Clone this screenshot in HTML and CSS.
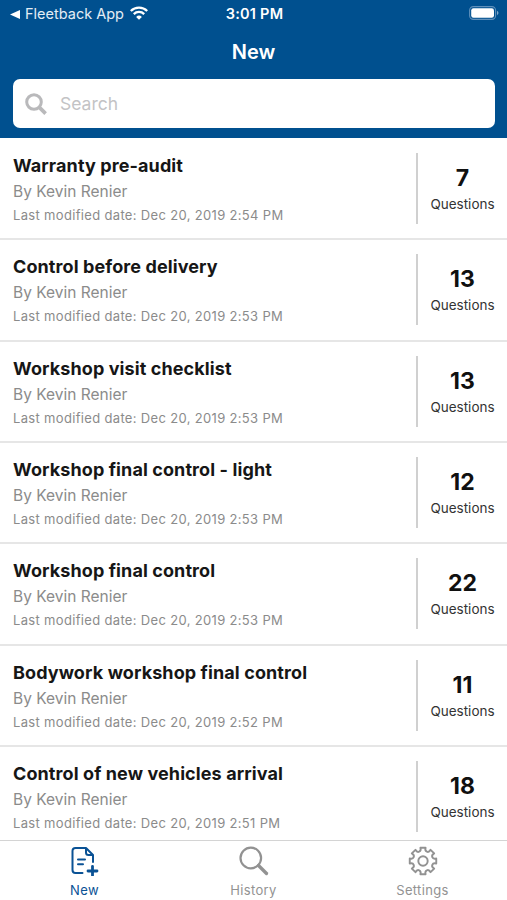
FILE: index.html
```html
<!DOCTYPE html>
<html lang="en">
<head>
<meta charset="utf-8">
<title>New</title>
<link rel="stylesheet" href="styles.css">
</head>
<body>
<div class="app">
  <header class="header">
    <div class="status">
      <div class="status-left">
        <svg class="back" width="10" height="9" viewBox="0 0 10 9"><path d="M0 4.500 10 0v9z" fill="#fff"/></svg>
        <span class="back-label">Fleetback App</span>
        <svg class="wifi" width="18" height="14" viewBox="0 0 18 14" fill="none" stroke="#fff" stroke-width="2.3"><path d="M.8 5a11.6 11.6 0 0 1 16.4 0M3.8 8.1a7.4 7.4 0 0 1 10.4 0"/><path d="M9 13.8 6.1 10.9a4.1 4.1 0 0 1 5.8 0z" fill="#fff" stroke="none"/></svg>
      </div>
      <span class="time">3:01 PM</span>
      <svg class="battery" width="30" height="14" viewBox="0 0 30 14"><rect x=".6" y=".6" width="26" height="12.8" rx="3.8" fill="none" stroke="#5f90bb" stroke-width="1.1"/><rect x="2.2" y="2.3" width="22.8" height="9.4" rx="2.2" fill="#fff"/><path d="M28 4.800Q31 7 28 9.200z" fill="#7fa6c8"/></svg>
    </div>
    <h1 class="title">New</h1>
    <div class="search">
      <svg width="22" height="22" viewBox="0 0 22 22" fill="none" stroke="#b9b9bb"><circle cx="9" cy="9" r="7.3" stroke-width="3"/><path d="m14.400 14.400 6.200 6.200" stroke-width="3.700"/></svg>
      <span class="placeholder">Search</span>
    </div>
  </header>
  <main class="list">
    <article class="row"><div class="info"><h2>Warranty pre-audit</h2><p class="by">By Kevin Renier</p><p class="date">Last modified date: Dec 20, 2019 2:54 PM</p></div><div class="count"><strong>7</strong><span>Questions</span></div></article>
    <article class="row"><div class="info"><h2>Control before delivery</h2><p class="by">By Kevin Renier</p><p class="date">Last modified date: Dec 20, 2019 2:53 PM</p></div><div class="count"><strong>13</strong><span>Questions</span></div></article>
    <article class="row"><div class="info"><h2>Workshop visit checklist</h2><p class="by">By Kevin Renier</p><p class="date">Last modified date: Dec 20, 2019 2:53 PM</p></div><div class="count"><strong>13</strong><span>Questions</span></div></article>
    <article class="row"><div class="info"><h2>Workshop final control - light</h2><p class="by">By Kevin Renier</p><p class="date">Last modified date: Dec 20, 2019 2:53 PM</p></div><div class="count"><strong>12</strong><span>Questions</span></div></article>
    <article class="row"><div class="info"><h2>Workshop final control</h2><p class="by">By Kevin Renier</p><p class="date">Last modified date: Dec 20, 2019 2:53 PM</p></div><div class="count"><strong>22</strong><span>Questions</span></div></article>
    <article class="row"><div class="info"><h2>Bodywork workshop final control</h2><p class="by">By Kevin Renier</p><p class="date">Last modified date: Dec 20, 2019 2:52 PM</p></div><div class="count"><strong>11</strong><span>Questions</span></div></article>
    <article class="row"><div class="info"><h2>Control of new vehicles arrival</h2><p class="by">By Kevin Renier</p><p class="date">Last modified date: Dec 20, 2019 2:51 PM</p></div><div class="count"><strong>18</strong><span>Questions</span></div></article>
  </main>
  <nav class="tabs">
    <div class="tab active">
      <svg width="30" height="30" viewBox="0 0 30 30" fill="none" stroke="currentColor" stroke-width="2" stroke-linecap="round" stroke-linejoin="round"><path d="M12.500 27H5.500a3 3 0 0 1-3-3V5a3 3 0 0 1 3-3H16l7 7V16M16 2v4.500a2.500 2.500 0 0 0 2.500 2.500h4.500M8 13.400h7M8 18.200h5"/><path d="M22.500 20.300v9.200M18 25h9" stroke-width="2.800"/></svg>
      <span>New</span>
    </div>
    <div class="tab">
      <svg width="30" height="30" viewBox="0 0 30 30" fill="none" stroke="currentColor"><circle cx="11.800" cy="12" r="10.300" stroke-width="2.200"/><path d="m19.500 19.500 8 8" stroke-width="3.300" stroke-linecap="round"/></svg>
      <span>History</span>
    </div>
    <div class="tab">
      <svg width="30" height="30" viewBox="-15 -15 30 30" fill="none" stroke="currentColor" stroke-width="1.900" stroke-linejoin="round"><path d="M-2.580-13.250H2.580C1.410-9.160 5.480-7.470 7.550-11.190L11.190-7.550C7.470-5.480 9.160-1.410 13.250-2.580V2.580C9.160 1.410 7.470 5.480 11.190 7.550L7.550 11.190C5.480 7.470 1.410 9.160 2.580 13.250H-2.580C-1.410 9.160-5.480 7.470-7.550 11.190L-11.190 7.550C-7.470 5.480-9.160 1.410-13.250 2.580V-2.580C-9.160-1.410-7.470-5.480-11.190-7.550L-7.550-11.190C-5.480-7.470-1.410-9.160-2.580-13.250Z"/><circle r="4.700"/></svg>
      <span>Settings</span>
    </div>
  </nav>
</div>
</body>
</html>
```
FILE: styles.css
```css
* { box-sizing: border-box; }
body { margin: 0; background: #fff; font-family: Inter, "Liberation Sans", sans-serif; }
h1, h2, p { margin: 0; }
svg { display: block; flex: none; }
.app { height: 900px; display: flex; flex-direction: column; overflow: hidden; }
.header { flex: none; height: 138px; background: #00508f; color: #fff; }
.status { height: 28px; padding: 0 8px 0 10px; display: grid; grid-template-columns: 1fr auto 1fr; align-items: center; }
.status-left { display: flex; align-items: center; }
.back-label { margin: -1px 0 0 5px; font-size: 14.500px; color: #e4edf5; }
.wifi { margin: -2px 0 0 6px; }
.time { margin-top: -1px; font-size: 14.500px; font-weight: 600; letter-spacing: 0.250px; }
.battery { justify-self: end; margin-top: -2px; }
.title { height: 51px; line-height: 49px; text-align: center; font-size: 20px; font-weight: 600; }
.search { height: 49px; margin: 0 12px 0 13px; padding: 0 12px; display: flex; align-items: center; gap: 13px; border-radius: 7px; background: #fff; }
.placeholder { font-size: 17.500px; color: #c3c3c5; }
.list { flex: 1; min-height: 0; overflow: hidden; padding-top: 1px; }
.row { height: 101.370px; padding: 14px 0 0 13px; display: flex; border-bottom: 2px solid #e6e6e6; }
.info { flex: 1; white-space: nowrap; }
.info h2 { font-size: 18px; line-height: 25px; font-weight: 650; letter-spacing: 0.100px; color: #161616; }
.by { font-size: 15.500px; line-height: 28px; color: #8b8b8b; }
.date { font-size: 13px; line-height: 19px; letter-spacing: 0.330px; color: #8b8b8b; }
.count { width: 91px; height: 71px; padding-top: 10px; border-left: 2px solid #d0d0d0; display: flex; flex-direction: column; align-items: center; color: #101010; }
.count strong { font-size: 23px; line-height: 31px; font-weight: 700; }
.count span { font-size: 13.500px; line-height: 21px; color: #333; }
.tabs { flex: none; height: 60px; border-top: 1px solid #d4d4d4; display: grid; grid-template-columns: repeat(3, 1fr); background: #fff; }
.tab { display: flex; flex-direction: column; align-items: center; padding-top: 5px; color: #929292; }
.tab span { font-size: 13px; line-height: 18px; margin-top: 5px; letter-spacing: 0.350px; }
.tab.active { color: #0a5295; }
```
